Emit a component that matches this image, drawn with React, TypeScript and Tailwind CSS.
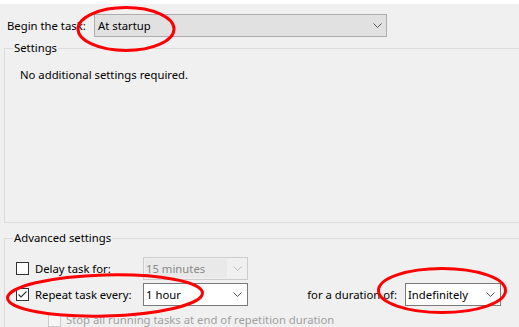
import React from "react";

function Chevron({ color }: { color: string }) {
  return (
    <svg width="9" height="5" viewBox="0 0 9 5" className="shrink-0">
      <path d="M0.5 0.5 L4.5 4.5 L8.5 0.5" fill="none" stroke={color} strokeWidth="1" />
    </svg>
  );
}

function CheckBox({ checked, disabled }: { checked?: boolean; disabled?: boolean }) {
  return (
    <div
      className={
        disabled
          ? "w-[13px] h-[13px] shrink-0 border border-[#cccccc] bg-[#f6f6f6]"
          : "w-[13px] h-[13px] shrink-0 border border-[#333333] bg-white"
      }
    >
      {checked && (
        <svg width="11" height="11" viewBox="0 0 11 11">
          <path d="M1.5 5.5 L4 8 L9.5 2.5" fill="none" stroke="#333" strokeWidth="1.1" />
        </svg>
      )}
    </div>
  );
}

export default function App() {
  return (
    <div className="relative w-[519px] h-[327px] overflow-hidden bg-[#f0f0f0] text-[11.3px] leading-[16px] text-black font-['Noto_Sans',sans-serif]">
      <div className="h-[4px] bg-white" />

      {/* Begin the task row */}
      <div className="flex items-center h-[23px] mt-[10px]">
        <span className="ml-[7px] w-[87px] whitespace-nowrap">Begin the task:</span>
        <div className="flex items-center w-[293px] h-[23px] border border-[#adadad] bg-[#e1e1e1] pl-[3px] pr-[4px]">
          <span className="flex-1 whitespace-nowrap">At startup</span>
          <Chevron color="#555555" />
        </div>
      </div>

      {/* Settings group */}
      <div className="ml-[4px] mt-[11px] h-[175px] border-t border-l border-b border-[#dcdcdc]">
        <div className="-mt-[9px] ml-[8px] w-fit bg-[#f0f0f0] px-[1px] whitespace-nowrap">Settings</div>
        <div className="mt-[11px] ml-[15px] whitespace-nowrap">No additional settings required.</div>
      </div>

      {/* Advanced settings group */}
      <div className="ml-[4px] mt-[15px] h-[100px] border-t border-l border-[#dcdcdc]">
        <div className="-mt-[9px] ml-[8px] w-fit bg-[#f0f0f0] px-[1px] whitespace-nowrap">Advanced settings</div>

        {/* Delay row */}
        <div className="flex items-center h-[23px] mt-[11px]">
          <div className="ml-[11px]">
            <CheckBox />
          </div>
          <span className="ml-[6px] w-[108px] whitespace-nowrap">Delay task for:</span>
          <div className="flex items-stretch w-[105px] h-[23px] border border-[#cccccc] bg-[#f0f0f0]">
            <div className="flex items-center w-[82px] bg-[#e9e9e9] my-[1px] ml-[1px] pl-[1px] text-[#8a8a8a] whitespace-nowrap">
              15 minutes
            </div>
            <div className="flex flex-1 items-center justify-center">
              <Chevron color="#bdbdbd" />
            </div>
          </div>
        </div>

        {/* Repeat row */}
        <div className="flex items-center h-[23px] mt-[3px]">
          <div className="ml-[11px]">
            <CheckBox checked />
          </div>
          <span className="ml-[6px] w-[108px] whitespace-nowrap">Repeat task every:</span>
          <div className="flex items-center w-[105px] h-[23px] border border-[#7a7a7a] bg-white pl-[2px] pr-[5px]">
            <span className="flex-1 whitespace-nowrap">1 hour</span>
            <Chevron color="#555555" />
          </div>
          <span className="w-[157px] pr-[8px] text-right whitespace-nowrap">for a duration of:</span>
          <div className="flex items-center w-[96px] h-[23px] border border-[#7a7a7a] bg-white pl-[2px] pr-[5px]">
            <span className="flex-1 whitespace-nowrap">Indefinitely</span>
            <Chevron color="#555555" />
          </div>
        </div>

        {/* Stop row */}
        <div className="flex items-center h-[16px] mt-[6px]">
          <div className="ml-[43px]">
            <CheckBox disabled />
          </div>
          <span className="ml-[5px] text-[#a0a0a0] whitespace-nowrap">
            Stop all running tasks at end of repetition duration
          </span>
        </div>
      </div>

      {/* Red annotation ellipses */}
      <svg
        className="absolute inset-0 pointer-events-none"
        width="519"
        height="327"
        viewBox="0 0 519 327"
      >
        <ellipse cx="126" cy="29" rx="48" ry="21.5" fill="none" stroke="#ff0000" strokeWidth="3" />
        <ellipse
          cx="105"
          cy="295.5"
          rx="97.5"
          ry="20.5"
          fill="none"
          stroke="#ff0000"
          strokeWidth="3"
          transform="rotate(-1.5 105 295.5)"
        />
        <ellipse cx="442" cy="290.5" rx="63.5" ry="22" fill="none" stroke="#ff0000" strokeWidth="3" />
      </svg>
    </div>
  );
}
